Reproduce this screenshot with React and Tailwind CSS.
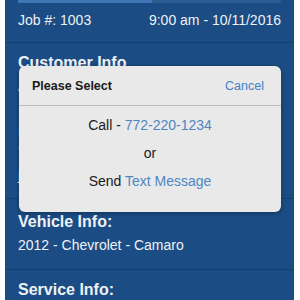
import React from "react";

const customer = [
  "John Smith",
  "123 Main Street",
  "Port St. Lucie, FL 34952",
  "772-220-1234",
  "jsmith@email.com",
];

const SelectModal = () => {
  return (
    <div className="absolute left-[14px] top-[66px] w-[262px] h-[146px] rounded-[6px] bg-[#e9e9e9] shadow-[0_1px_4px_rgba(0,0,0,0.35)] text-[#1a1a1a]">
      {/* header */}
      <div className="flex items-center justify-between h-[40px] pl-[13px] pr-[17px] border-b border-[#bcbcbc]">
        <span className="font-bold text-[12.5px] leading-[20px]">Please Select</span>
        <span className="text-[12.5px] leading-[20px] text-[#3f83c8]">Cancel</span>
      </div>
      {/* options */}
      <div className="flex flex-col items-center gap-[8px] pt-[9px] text-[14px] leading-[20px]">
        <p>
          Call - <span className="text-[#4f86c3]">772-220-1234</span>
        </p>
        <p>or</p>
        <p>
          Send <span className="text-[#4f86c3]">Text Message</span>
        </p>
      </div>
    </div>
  );
};

export default function App() {
  return (
    <div className="w-[300px] h-[300px] overflow-hidden bg-white font-['Liberation_Sans',Arial,sans-serif]">
      <div className="relative ml-[5px] w-[289px] h-[300px] bg-[#1b4c84] text-[#eef2f7]">
        {/* segmented bar */}
        <div className="mx-[13px] flex h-[3px]">
          <div className="w-[134px] bg-[#3f76b6]" />
          <div className="flex-1 bg-[#2d5c92] rounded-br-[2px]" />
        </div>

        {/* job row */}
        <div className="flex justify-between px-[13px] pt-[7px] pb-[12px] text-[14px] leading-[20px] border-b border-[#153f6d]">
          <span>Job #: 1003</span>
          <span>9:00 am - 10/11/2016</span>
        </div>

        {/* customer */}
        <div className="px-[13px] pt-[10px] pb-[12px] border-b border-[#153f6d]">
          <h2 className="font-bold text-[16px] leading-[20px]">Customer Info</h2>
          <div className="mt-[3px] text-[14px] leading-[22px]">
            {customer.map((line) => (
              <p key={line}>{line}</p>
            ))}
          </div>
        </div>

        {/* vehicle */}
        <div className="px-[13px] pt-[13px] pb-[14px] border-b border-[#153f6d]">
          <h2 className="font-bold text-[16px] leading-[20px]">Vehicle Info:</h2>
          <p className="mt-[3px] text-[14px] leading-[20px]">2012 - Chevrolet - Camaro</p>
        </div>

        {/* service */}
        <div className="px-[13px] pt-[10px]">
          <h2 className="font-bold text-[16px] leading-[20px]">Service Info:</h2>
        </div>

        <SelectModal />
      </div>
    </div>
  );
}
